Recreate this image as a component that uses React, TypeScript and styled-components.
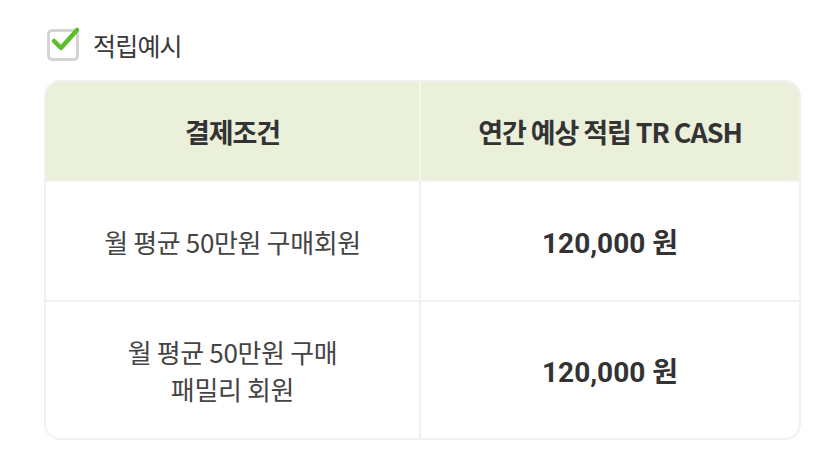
import React from 'react'
import styled, { createGlobalStyle } from 'styled-components'

const rows = [
  { label: ['월 평균 50만원 구매회원'], amount: '120,000 원', tall: false },
  { label: ['월 평균 50만원 구매', '패밀리 회원'], amount: '120,000 원', tall: true },
]

export default function App() {
  return (
    <>
      <GlobalStyle />
      <Page>
        <Legend>
          <CheckBox>
            <svg width="34" height="30" viewBox="0 0 34 30">
              <path d="M7 15 L14 22 L30 4" fill="none" stroke="#5cbf2a" strokeWidth="4.5" strokeLinecap="round" strokeLinejoin="round" />
            </svg>
          </CheckBox>
          <LegendText>적립예시</LegendText>
        </Legend>

        <Table>
          <HeadCell>결제조건</HeadCell>
          <HeadCell last>연간 예상 적립 TR CASH</HeadCell>
          {rows.map((row, i) => (
            <React.Fragment key={i}>
              <BodyCell tall={row.tall}>
                <Label>
                  {row.label.map((line) => (
                    <LabelLine key={line}>{line}</LabelLine>
                  ))}
                </Label>
              </BodyCell>
              <BodyCell tall={row.tall} last>
                <Amount>{row.amount}</Amount>
              </BodyCell>
            </React.Fragment>
          ))}
        </Table>
      </Page>
    </>
  )
}

const GlobalStyle = createGlobalStyle`
  html, body {
    margin: 0;
    padding: 0;
    background: #ffffff;
  }
  body {
    font-family: "Noto Sans CJK KR", "Noto Sans", sans-serif;
    color: #333;
  }
`

const Page = styled.div`
  width: 838px;
  height: 466px;
  padding: 28px 0 0 46px;
  box-sizing: border-box;
`

const Legend = styled.div`
  display: flex;
  align-items: center;
  gap: 14px;
  height: 34px;
  margin-bottom: 20px;
`

const CheckBox = styled.div`
  position: relative;
  width: 26px;
  height: 26px;
  margin-left: 1px;
  border: 3px solid #d4d4d4;
  border-radius: 5px;
  background: #fff;

  svg {
    position: absolute;
    left: -3px;
    top: -6px;
  }
`

const LegendText = styled.span`
  font-size: 25px;
  color: #3a3a3a;
  letter-spacing: -0.8px;
`

const Table = styled.div`
  display: grid;
  grid-template-columns: 375px 378px;
  width: 753px;
  border-radius: 14px;
  box-shadow: 0 0 0 2px #f1f1f1;
  overflow: hidden;
`

const HeadCell = styled.div<{ last?: boolean }>`
  height: 98px;
  display: flex;
  align-items: center;
  justify-content: center;
  background: #eaf0da;
  border-right: ${(p) => (p.last ? 'none' : '2px solid #f4f7ec')};
  font-size: 27px;
  font-weight: 700;
  letter-spacing: -1.1px;
  color: #333;
`

const BodyCell = styled.div<{ tall?: boolean; last?: boolean }>`
  height: ${(p) => (p.tall ? '136px' : '118px')};
  display: flex;
  align-items: center;
  justify-content: center;
  border-right: ${(p) => (p.last ? 'none' : '2px solid #f1f1f1')};
  border-top: 2px solid #f1f1f1;
`

const Label = styled.div`
  display: flex;
  flex-direction: column;
  align-items: center;
  gap: 0;
  color: #444;
  text-align: center;
`

const LabelLine = styled.div`
  font-size: 26px;
  line-height: 37px;
  letter-spacing: -0.35px;
`

const Amount = styled.div`
  font-family: Roboto, "Noto Sans CJK KR", sans-serif;
  font-size: 28px;
  font-weight: 700;
  color: #333;
  letter-spacing: 0;
`
